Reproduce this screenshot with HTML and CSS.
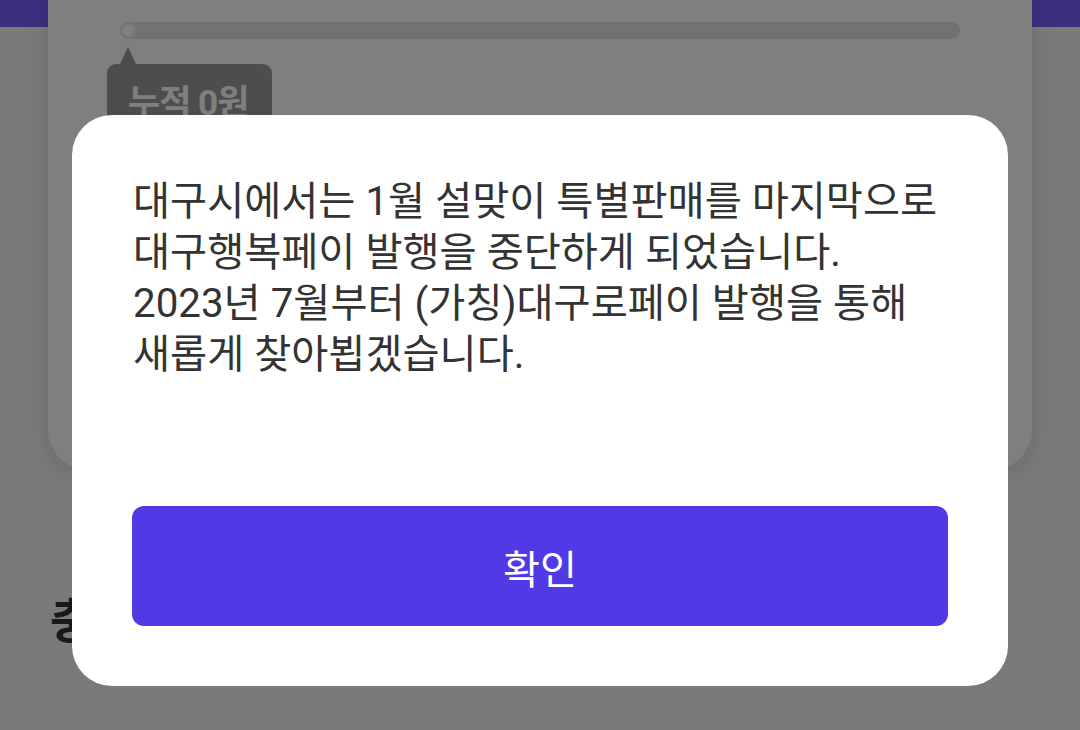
FILE: index.html
```html
<!DOCTYPE html>
<html lang="ko">
<head>
    <meta charset="UTF-8">
    <meta name="viewport" content="width=device-width, initial-scale=1.0">
    <title>대구행복페이</title>
    <link rel="stylesheet" href="styles.css">
</head>
<body>

<div class="page">
    <div class="topbar"></div>
    <section class="card">
        <div class="progress">
            <span class="knob"></span>
        </div>
        <div class="tip">누적 0원</div>
    </section>
    <h2 class="section-title">충전 내역</h2>
</div>

<div class="overlay">
    <div class="dialog">
        <p class="dialog-text">대구시에서는 1월 설맞이 특별판매를 마지막으로<br>대구행복페이 발행을 중단하게 되었습니다.<br>2023년 7월부터 (가칭)대구로페이 발행을 통해<br>새롭게 찾아뵙겠습니다.</p>
        <button type="button" class="dialog-btn">확인</button>
    </div>
</div>

</body>
</html>
```

FILE: styles.css
```css
html, body {
    margin: 0;
    height: 100%;
}
body {
    background-color: #f4f4f6;
    font-family: Roboto, "Noto Sans CJK KR", sans-serif;
    overflow: hidden;
}
.page {
    width: 1080px;
}
.topbar {
    height: 27px;
    background-color: #7a5eff;
}
.card {
    margin: -87px 48px 0;
    padding: 82px 72px 0;
    height: 530px;
    box-sizing: border-box;
    background-color: #ffffff;
    border-radius: 0 0 40px 40px;
    box-shadow: 0 6px 24px rgba(0, 0, 0, 0.12);
}
.progress {
    position: relative;
    height: 17px;
    border-radius: 9px;
    background-color: #e3e3e3;
}
.progress .knob {
    position: absolute;
    left: 1px;
    top: 1px;
    width: 11px;
    height: 11px;
    border: 2px solid #ececec;
    border-radius: 50%;
    background-color: #ffffff;
}
.tip {
    position: relative;
    display: inline-block;
    margin: 25px 0 0 -13px;
    padding: 10px 21px 20px;
    width: 123px;
    border-radius: 9px;
    background-color: #9b9b9b;
    color: #ffffff;
    font-size: 35px;
    font-weight: bold;
    letter-spacing: -1px;
    white-space: nowrap;
}
.tip::before {
    content: "";
    position: absolute;
    left: 13px;
    top: -17px;
    border-left: 8px solid transparent;
    border-right: 8px solid transparent;
    border-bottom: 17px solid #9b9b9b;
}
.section-title {
    margin: 112px 0 0 50px;
    font-size: 48px;
    font-weight: bold;
    color: #333333;
}

.overlay {
    position: fixed;
    inset: 0;
    display: flex;
    justify-content: center;
    align-items: flex-start;
    padding-top: 115px;
    background-color: rgba(0, 0, 0, 0.5);
}
.dialog {
    width: 936px;
    box-sizing: border-box;
    padding: 61px 60px 60px;
    background-color: #ffffff;
    border-radius: 40px;
}
.dialog-text {
    margin: 0 0 0 1px;
    font-size: 40.3px;
    line-height: 51px;
    color: #333333;
    white-space: nowrap;
}
.dialog-btn {
    display: block;
    width: 100%;
    height: 120px;
    margin-top: 126px;
    border: none;
    border-radius: 12px;
    background-color: #5139e6;
    color: #ffffff;
    font-family: inherit;
    font-size: 40.3px;
    cursor: pointer;
}
```
